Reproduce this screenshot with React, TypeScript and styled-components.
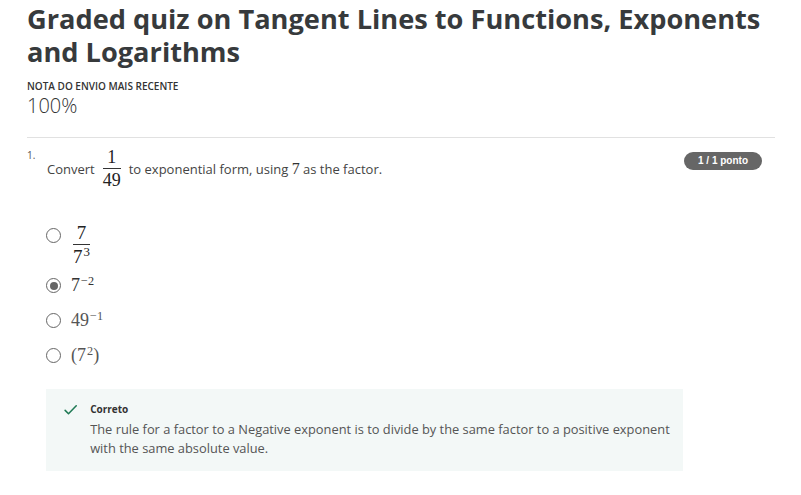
import React from "react";
import styled, { createGlobalStyle } from "styled-components";

const Global = createGlobalStyle`
  html, body { margin: 0; padding: 0; background: #fff; }
  body { font-family: "Open Sans", "Liberation Sans", sans-serif; color: #333; }
`;

const Page = styled.div`
  padding: 2px 26px 0 27px;
`;

const Title = styled.h1`
  margin: 0;
  font-size: 27.2px;
  line-height: 33px;
  font-weight: 700;
  color: #373a3c;
`;

const GradeLabel = styled.div`
  margin-top: 11px;
  font-size: 10px;
  line-height: 14px;
  font-weight: 600;
  color: #333;
`;

const GradeValue = styled.div`
  margin-top: 0;
  font-size: 20px;
  line-height: 26px;
  font-weight: 300;
  color: #333;
`;

const Divider = styled.hr`
  margin: 18px 0 0;
  border: 0;
  border-top: 1px solid #e1e1e1;
`;

const QuestionRow = styled.div`
  display: flex;
  align-items: flex-start;
  margin-top: 10px;
`;

const QNumber = styled.div`
  width: 20px;
  font-size: 10px;
  line-height: 14px;
  color: #555;
`;

const QBody = styled.div`
  flex: 1;
`;

const Prompt = styled.div`
  display: flex;
  align-items: center;
  font-size: 13px;
  color: #444;
  gap: 6px;
`;

const Frac = styled.span<{ $size?: number }>`
  display: inline-flex;
  flex-direction: column;
  align-items: center;
  font-family: "Liberation Serif", "DejaVu Serif", serif;
  font-size: ${(p) => p.$size ?? 18}px;
  line-height: 1.05;
  color: #222;
  padding: 0 2px;
`;

const Num = styled.span`
  padding: 0 2px 1px;
  border-bottom: 1px solid #333;
  align-self: stretch;
  text-align: center;
`;

const Den = styled.span`
  padding-top: 2px;
`;

const MathText = styled.span<{ $muted?: boolean }>`
  font-family: "Liberation Serif", "DejaVu Serif", serif;
  font-size: 18px;
  color: ${(p) => (p.$muted ? "#555" : "#333")};
`;

const InlineMath = styled.span`
  font-family: "Liberation Serif", "DejaVu Serif", serif;
  font-size: 16px;
  color: #333;
`;

const Sup = styled.sup`
  font-size: 0.68em;
  vertical-align: 0.55em;
  line-height: 0;
  margin-left: 1px;
`;

const Badge = styled.div`
  margin-top: 4px;
  background: #666;
  color: #fff;
  font-family: "Liberation Sans", Arial, sans-serif;
  font-weight: 700;
  font-size: 10px;
  line-height: 18px;
  padding: 0 14px;
  border-radius: 9px;
  margin-right: 13px;
`;

const Options = styled.div`
  margin: 32px 0 0 -1px;
  display: flex;
  flex-direction: column;
  gap: 1px;
`;

const Option = styled.label<{ $h: number }>`
  display: flex;
  align-items: center;
  gap: 10px;
  height: ${(p) => p.$h}px;
`;

const Radio = styled.span<{ $checked?: boolean; $raise?: number }>`
  width: 15px;
  height: 15px;
  box-sizing: border-box;
  border-radius: 50%;
  border: 1.5px solid #666;
  display: inline-flex;
  align-items: center;
  justify-content: center;
  flex-shrink: 0;
  margin-bottom: ${(p) => (p.$raise ?? 0) * 2}px;
  &::after {
    content: "";
    display: ${(p) => (p.$checked ? "block" : "none")};
    width: 8px;
    height: 8px;
    border-radius: 50%;
    background: #666;
  }
`;

const Feedback = styled.div`
  margin: 16px 0 0 19px;
  width: 637px;
  background: #f3f8f7;
  padding: 13px 4px 13px 18px;
  box-sizing: border-box;
  display: flex;
  gap: 13px;
`;

const FeedbackText = styled.div`
  display: flex;
  flex-direction: column;
`;

const FeedbackTitle = styled.div`
  font-size: 10px;
  font-weight: 700;
  line-height: 14px;
  color: #333;
`;

const FeedbackBody = styled.div`
  margin-top: 4px;
  font-size: 12.85px;
  line-height: 19px;
  color: #555;
`;

const CheckIcon = () => (
  <svg width="17" height="16" viewBox="0 0 17 16">
    <polyline
      points="1.5,8.5 5.8,12.8 15.8,2.5"
      fill="none"
      stroke="#1f7a55"
      strokeWidth="2"
      strokeLinecap="round"
      strokeLinejoin="round"
    />
  </svg>
);

export default function App() {
  return (
    <>
      <Global />
      <Page>
        <Title>Graded quiz on Tangent Lines to Functions, Exponents and Logarithms</Title>
        <GradeLabel>NOTA DO ENVIO MAIS RECENTE</GradeLabel>
        <GradeValue>100%</GradeValue>
        <Divider />
        <QuestionRow>
          <QNumber>1.</QNumber>
          <QBody>
            <Prompt>
              <span>Convert</span>
              <Frac>
                <Num>1</Num>
                <Den>49</Den>
              </Frac>
              <span>
                to exponential form, using <InlineMath>7</InlineMath> as the factor.
              </span>
            </Prompt>
            <Options>
              <Option $h={46}>
                <Radio $raise={9} />
                <Frac $size={19}>
                  <Num>7</Num>
                  <Den>
                    7<Sup>3</Sup>
                  </Den>
                </Frac>
              </Option>
              <Option $h={34}>
                <Radio $checked />
                <MathText>
                  7<Sup>−2</Sup>
                </MathText>
              </Option>
              <Option $h={34}>
                <Radio />
                <MathText $muted>
                  49<Sup>−1</Sup>
                </MathText>
              </Option>
              <Option $h={34}>
                <Radio />
                <MathText $muted>
                  (7<Sup>2</Sup>)
                </MathText>
              </Option>
            </Options>
          </QBody>
          <Badge>1 / 1 ponto</Badge>
        </QuestionRow>
        <Feedback>
          <CheckIcon />
          <FeedbackText>
            <FeedbackTitle>Correto</FeedbackTitle>
            <FeedbackBody>
              The rule for a factor to a Negative exponent is to divide by the same factor to a positive exponent
              with the same absolute value.
            </FeedbackBody>
          </FeedbackText>
        </Feedback>
      </Page>
    </>
  );
}
